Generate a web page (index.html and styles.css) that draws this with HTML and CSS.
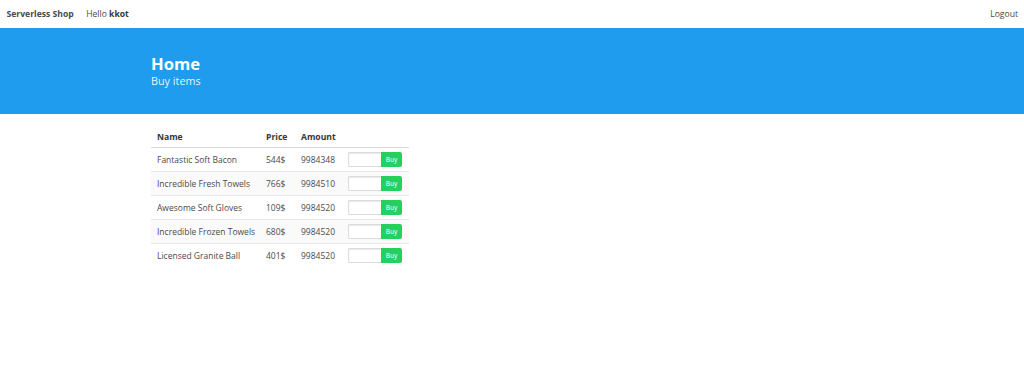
FILE: index.html
```html
<!DOCTYPE html>
<html lang="en">
<head>
<meta charset="utf-8">
<title>Serverless Shop</title>
<link rel="stylesheet" href="styles.css">
</head>
<body>
<nav class="navbar">
  <div class="nav-start">
    <a class="nav-item brand">Serverless Shop</a>
    <span class="nav-item">Hello <strong>kkot</strong></span>
  </div>
  <div class="nav-end">
    <a class="nav-item">Logout</a>
  </div>
</nav>
<section class="hero">
  <div class="container">
    <h1 class="title">Home</h1>
    <h2 class="subtitle">Buy items</h2>
  </div>
</section>
<main class="container content">
  <table class="table">
    <thead>
      <tr>
        <th class="c-name">Name</th>
        <th class="c-price">Price</th>
        <th class="c-amount">Amount</th>
        <th class="c-action"></th>
      </tr>
    </thead>
    <tbody>
      <tr><td>Fantastic Soft Bacon</td><td>544$</td><td>9984348</td><td><div class="buy"><input class="qty" type="text"><button class="btn">Buy</button></div></td></tr>
      <tr><td>Incredible Fresh Towels</td><td>766$</td><td>9984510</td><td><div class="buy"><input class="qty" type="text"><button class="btn">Buy</button></div></td></tr>
      <tr><td>Awesome Soft Gloves</td><td>109$</td><td>9984520</td><td><div class="buy"><input class="qty" type="text"><button class="btn">Buy</button></div></td></tr>
      <tr><td>Incredible Frozen Towels</td><td>680$</td><td>9984520</td><td><div class="buy"><input class="qty" type="text"><button class="btn">Buy</button></div></td></tr>
      <tr><td>Licensed Granite Ball</td><td>401$</td><td>9984520</td><td><div class="buy"><input class="qty" type="text"><button class="btn">Buy</button></div></td></tr>
    </tbody>
  </table>
</main>
</body>
</html>
```
FILE: styles.css
```css
* { box-sizing: border-box; }
html, body { margin: 0; padding: 0; background: #fff; }
body {
  font-family: "Open Sans", "Noto Sans", sans-serif;
  color: #4a4a4a;
  font-size: 9px;
}
.navbar {
  height: 28px;
  display: flex;
  justify-content: space-between;
  align-items: center;
  background: #fff;
}
.nav-start, .nav-end { display: flex; align-items: center; height: 100%; }
.nav-item {
  padding: 0 6.5px;
  font-size: 8.6px;
  color: #4a4a4a;
  line-height: 28px;
}
.nav-item strong { color: #363636; font-weight: 700; }
.brand { font-weight: 700; color: #4a4a4a; padding-right: 6px; }
.nav-end .nav-item { padding-right: 6px; }
.hero {
  background: #209cee;
  height: 86px;
  color: #fff;
  display: flex;
  align-items: center;
}
.container { width: 722px; margin: 0 auto; }
.title {
  margin: 0;
  font-size: 16.6px;
  font-weight: 700;
  line-height: 20px;
  color: #fff;
}
.subtitle {
  margin: 0;
  font-size: 10.8px;
  font-weight: 400;
  line-height: 14px;
  color: rgba(255,255,255,0.9);
}
.content { padding-top: 13px; }
.table {
  border-collapse: collapse;
  table-layout: fixed;
  width: 258px;
}
.c-name { width: 109px; }
.c-price { width: 35px; }
.c-amount { width: 47px; }
.c-action { width: 67px; }
.table th {
  text-align: left;
  font-weight: 700;
  color: #363636;
  font-size: 8.6px;
  height: 20px;
  padding: 0 6px;
  border-bottom: 1px solid #dbdbdb;
}
.table td {
  font-size: 8.5px;
  height: 24px;
  padding: 0 6px;
  border-bottom: 1px solid #e8e8e8;
  white-space: nowrap;
  vertical-align: middle;
}
.table tbody tr:nth-child(even) { background: #fafafa; }
.table tbody tr:last-child td { border-bottom: 0; }
.buy { display: flex; height: 15px; }
.qty {
  width: 33px;
  height: 15px;
  margin: 0;
  padding: 0 3px;
  border: 1px solid #dbdbdb;
  border-right: 0;
  border-radius: 2px 0 0 2px;
  background: #fff;
  box-shadow: inset 0 1px 1px rgba(10,10,10,0.08);
  font-size: 7px;
  outline: none;
}
.btn {
  width: 21px;
  height: 15px;
  margin: 0;
  padding: 0;
  border: 0;
  border-radius: 0 2px 2px 0;
  background: #23d160;
  color: #fff;
  font-family: "Open Sans", "Noto Sans", sans-serif;
  font-size: 6.5px;
  line-height: 15px;
  text-align: center;
}
```
